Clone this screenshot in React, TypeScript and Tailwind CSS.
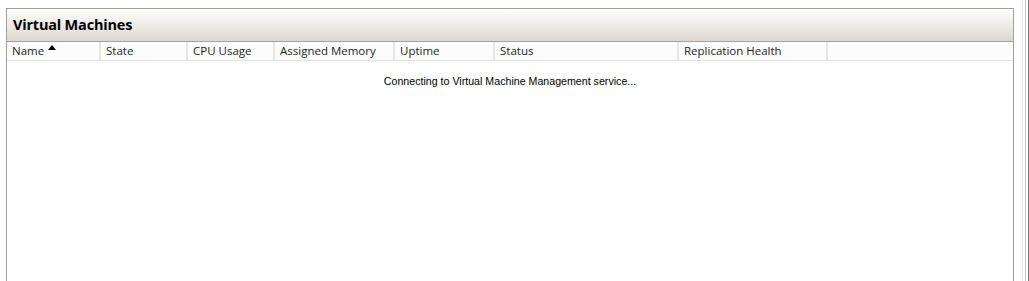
const columns = [
  { label: "Name", width: "w-[94px]", sorted: true },
  { label: "State", width: "w-[87px]" },
  { label: "CPU Usage", width: "w-[87px]" },
  { label: "Assigned Memory", width: "w-[120px]" },
  { label: "Uptime", width: "w-[100px]" },
  { label: "Status", width: "w-[184px]" },
  { label: "Replication Health", width: "w-[149px]" },
];

export default function App() {
  return (
    <div className="flex h-[281px] w-[1029px] overflow-hidden bg-white font-['Open_Sans','Noto_Sans',sans-serif]">
      <div className="ml-[6px] mt-[8px] flex h-[300px] w-[1008px] flex-col border-x border-t border-[#a0a0a0]">
        <div className="flex h-[33px] items-center border-b border-[#a6a39e] bg-gradient-to-b from-[#fefefd] to-[#dcd9d3] pl-[6px]">
          <span className="text-[14.5px] font-bold tracking-[-0.2px] text-black">Virtual Machines</span>
        </div>
        <div className="flex h-[19px] border-b border-[#e2e2e2] bg-[#fcfcfc]">
          {columns.map((col) => (
            <div
              key={col.label}
              className={`${col.width} flex items-center border-r-2 border-[#e6e6e6] pl-[5px] text-[11.5px] leading-none text-[#1e1e1e]`}
            >
              <span>{col.label}</span>
              {col.sorted && (
                <svg className="mb-[8px] ml-[4px]" width="8" height="5" viewBox="0 0 8 5">
                  <path d="M0 5 L4 0 L8 5 Z" fill="#000" />
                </svg>
              )}
            </div>
          ))}
        </div>
        <div className="flex justify-center pt-[13px] font-['Liberation_Sans',sans-serif] text-[10.65px] text-black">
          Connecting to Virtual Machine Management service...
        </div>
      </div>
      <div className="ml-[8px] flex h-full">
        <div className="w-px bg-[#ececec]" />
        <div className="w-[2px] bg-white" />
        <div className="w-px bg-[#c8c8c8]" />
        <div className="w-[2px] bg-white" />
        <div className="w-px bg-[#7a7a7a]" />
      </div>
    </div>
  );
}
